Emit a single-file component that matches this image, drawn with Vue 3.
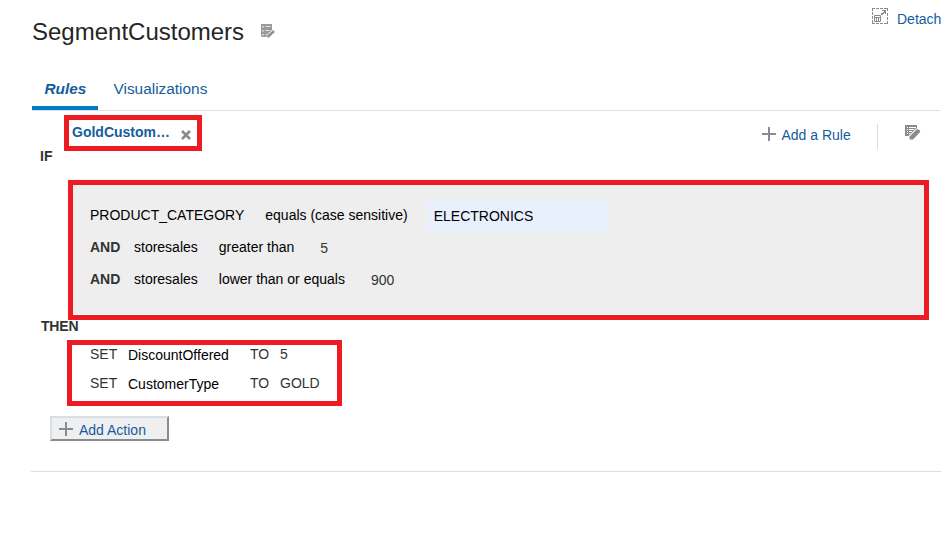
<script setup>
const tabs = [
  { label: 'Rules', active: true },
  { label: 'Visualizations', active: false }
]
const conditions = [
  { field: 'PRODUCT_CATEGORY', op: 'equals (case sensitive)', value: 'ELECTRONICS', editing: true },
  { join: 'AND', field: 'storesales', op: 'greater than', value: '5' },
  { join: 'AND', field: 'storesales', op: 'lower than or equals', value: '900' }
]
const actions = [
  { target: 'DiscountOffered', value: '5' },
  { target: 'CustomerType', value: 'GOLD' }
]
</script>

<template>
  <main class="page">
    <header class="header">
      <h1 class="title">SegmentCustomers</h1>
      <svg class="title-icon" width="14" height="14" viewBox="0 0 14 14">
        <path fill="#96999e" d="M0 0h11v6L6 11v2H1l-1-1z" />
        <path stroke="#e4e5e7" stroke-width="1" d="M4.500 2.500h5M4.500 6.500h4M4.500 10.500h1" />
        <path fill="#e3cdb0" d="M1 2h2v1.500h-2zM1 6h2v1.500h-2zM1 10h2v1.500h-2z" />
        <path stroke="#fff" stroke-width="4" d="M6.500 13.500l7-7" />
        <path stroke="#8b8f94" stroke-width="2.500" d="M6.500 13l6.500-6" />
      </svg>
      <a class="detach">
        <svg width="16" height="16" viewBox="0 0 16 16" fill="none" stroke="#878c90">
          <path d="M0 .5h3M4 .5h3M8 .5h3M12 .5h4M0 15.5h3M4 15.5h3M8 15.5h3M12 15.5h4M.5 0v3M.5 4v3M.5 8v3M.5 12v4M15.5 0v3M15.5 5v3M15.5 9v3M15.5 13v3" />
          <path d="M2.500 7.500h6v6h-6zM2 9.500h7M4.500 9.500v4M6.500 9.500v4" />
          <path fill="#878c90" stroke="none" d="M10 2h4v4h-1V5h-1v1h-1v1H9V5h2V4h1V3h-2z" />
        </svg>
        <span>Detach</span>
      </a>
    </header>

    <nav class="tabs">
      <a v-for="t in tabs" :key="t.label" class="tab" :class="{ active: t.active }">{{ t.label }}</a>
    </nav>

    <section class="toolbar">
      <div class="rule-tab">
        <b>GoldCustom…</b>
        <svg width="10" height="10" viewBox="0 0 10 10"><path d="M1 1l8 8M9 1L1 9" stroke="#858a8f" stroke-width="2.500" /></svg>
      </div>
      <a class="add-rule">
        <svg width="14" height="14" viewBox="0 0 14 14"><path d="M7 0v14M0 7h14" stroke="#878c90" stroke-width="2" /></svg>
        <span>Add a Rule</span>
      </a>
      <i class="divider"></i>
      <svg class="edit-icon" width="16" height="15" viewBox="0 0 16 15">
        <path fill="#878c90" d="M0 0h12v4L5 11H0z" />
        <path stroke="#fff" d="M2 2.500h1M4 2.500h7M2 4.500h1M4 4.500h5M2 6.500h1M4 6.500h3M2 8.500h1M4 8.500h1" />
        <path stroke="#fff" stroke-width="5" d="M5 13l8-8" />
        <path fill="#878c90" d="M4.500 14.500V11.500L11.500 4.500q1-.7 2.200 0l1.300 1.300q.5 1-.3 1.700L8 14.500z" />
      </svg>
    </section>

    <div class="keyword if">IF</div>

    <section class="conditions">
      <div v-for="(c, i) in conditions" :key="i" class="condition">
        <b v-if="c.join" class="join">{{ c.join }}</b>
        <span class="field">{{ c.field }}</span>
        <span class="op">{{ c.op }}</span>
        <span class="value" :class="{ editing: c.editing }">{{ c.value }}</span>
      </div>
    </section>

    <div class="keyword then">THEN</div>

    <section class="actions">
      <div v-for="a in actions" :key="a.target" class="action">
        <span class="set">SET</span>
        <span class="target">{{ a.target }}</span>
        <span class="to">TO</span>
        <span>{{ a.value }}</span>
      </div>
    </section>

    <button class="add-action">
      <svg width="14" height="14" viewBox="0 0 14 14"><path d="M7 0v14M0 7h14" stroke="#878c90" stroke-width="2" /></svg>
      <span>Add Action</span>
    </button>
    <hr class="end-line" />
  </main>
</template>

<style>
body { margin: 0; background: #fff; }
</style>

<style scoped>
* { box-sizing: border-box; }
.page {
  display: flex;
  flex-direction: column;
  align-items: flex-start;
  width: 948px;
  height: 546px;
  overflow: hidden;
  font: 14px/16px "Liberation Sans", Arial, sans-serif;
  color: #333;
  white-space: nowrap;
}
svg { display: block; flex: none; }
a { color: #145c9e; }
.header { display: flex; align-items: flex-start; width: 941px; height: 80px; padding-left: 32px; }
.title { margin: 18px 0 0; width: 229px; font-size: 24px; line-height: 28px; font-weight: 400; color: #252525; }
.title-icon { margin-top: 24px; }
.detach { display: flex; margin-left: auto; padding-top: 8px; }
.detach span { margin: 3px 0 0 9px; width: 44px; }
.tabs { display: flex; margin-left: 32px; width: 908px; height: 31px; border-bottom: 1px solid #d6dfe6; }
.tab { height: 30px; font-size: 15.4px; line-height: 18px; }
.tab.active { width: 66px; margin-right: 15.5px; padding-left: 12.5px; border-bottom: 4px solid #007ac7; font-weight: 700; font-style: italic; }
.toolbar { display: flex; align-items: flex-start; margin: 4px 0 0 64px; width: 857px; height: 34px; }
.rule-tab { display: flex; width: 138px; height: 36px; border: 5px solid #ed1c24; padding: 4px 0 0 3px; }
.rule-tab b { width: 109px; color: #145c9e; }
.rule-tab svg { margin-top: 6px; }
.add-rule { display: flex; width: 115px; margin: 12px 0 0 560px; }
.add-rule span { margin-left: 5.5px; }
.divider { width: 1px; height: 25px; margin-top: 9px; background: #d9dcdf; }
.edit-icon { margin: 10px 0 0 27px; }
.keyword { font-weight: 700; margin-left: 40px; }
.if { margin-top: -1px; height: 32px; }
.conditions { width: 861px; height: 140px; margin-left: 68px; border: 5px solid #ed1c24; background: #eee; box-shadow: inset 0 -1px #fff, 0 -1px #f3f3f3; padding: 14px 0 0 17px; }
.condition { display: flex; height: 32px; padding-top: 8px; color: #000; }
.join { width: 44px; color: #333; }
.field { margin-right: 21px; }
.value { margin: 1px 0 0 26px; color: #333; }
.value.editing { margin: -7px 0 0 20px; width: 180px; height: 32px; padding: 8px 0 0 6px; background: #e8f0fe; color: #000; }
.then { margin: -2px 0 0 41px; height: 22px; letter-spacing: -0.2px; }
.actions { width: 275px; height: 66px; margin-left: 67px; border: 5px solid #ed1c24; padding: 1px 0 0 18px; }
.action { display: flex; height: 29px; }
.set { width: 38px; }
.target { width: 122px; padding-top: 1px; color: #000; }
.to { width: 30px; }
.add-action { display: flex; width: 119px; height: 25px; margin: 10px 0 0 50px; padding: 4px 0 0 7px; border: 2px solid; border-color: #d6dfe6 #878c92 #878c92 #d6dfe6; background: #efefef; font: inherit; color: #145c9e; }
.add-action span { margin-left: 6px; }
.end-line { width: 910px; height: 1px; margin: 30px 0 0 31px; border: 0; background: #d6dfe6; }
</style>
